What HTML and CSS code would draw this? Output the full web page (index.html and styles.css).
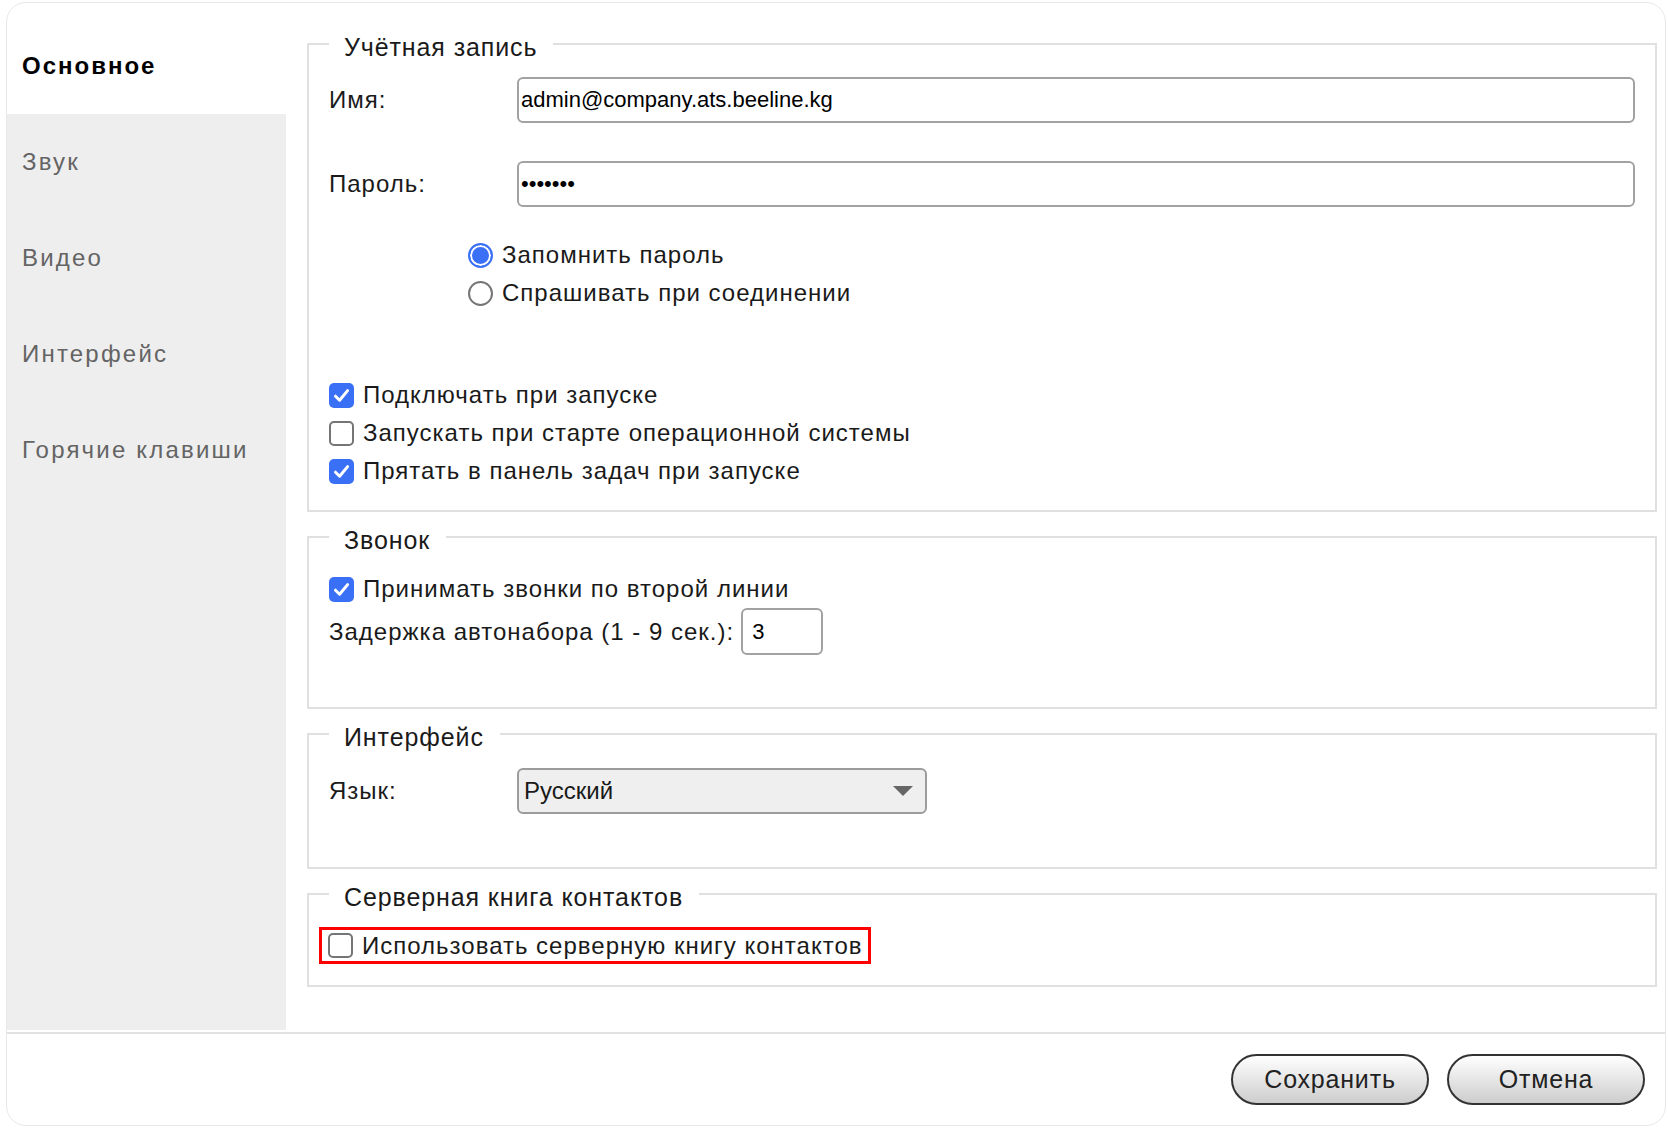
FILE: index.html
```html
<!DOCTYPE html>
<html lang="ru">
<head>
<meta charset="utf-8">
<title>Настройки</title>
<link rel="stylesheet" href="styles.css">
</head>
<body>
<div class="window">
  <div class="main">
    <nav class="sidebar">
      <div class="nav-item active">Основное</div>
      <div class="nav-rest">
        <div class="nav-item">Звук</div>
        <div class="nav-item">Видео</div>
        <div class="nav-item">Интерфейс</div>
        <div class="nav-item">Горячие клавиши</div>
      </div>
    </nav>
    <div class="content">
      <fieldset class="group group-account">
        <legend>Учётная запись</legend>
        <div class="field-row row-name">
          <span class="field-label">Имя:</span>
          <input class="text-input" type="text" value="admin@company.ats.beeline.kg">
        </div>
        <div class="field-row row-pass">
          <span class="field-label">Пароль:</span>
          <input class="text-input" type="password" value="1234567">
        </div>
        <div class="radio-group">
          <div class="option"><span class="radio on"></span><span>Запомнить пароль</span></div>
          <div class="option"><span class="radio"></span><span>Спрашивать при соединении</span></div>
        </div>
        <div class="check-group">
          <div class="option"><span class="check on"><svg viewBox="0 0 25 25" width="25" height="25"><path d="M6.5 13.2 L10.6 17.2 L18.6 7.6" fill="none" stroke="#fff" stroke-width="3" stroke-linecap="round" stroke-linejoin="round"/></svg></span><span>Подключать при запуске</span></div>
          <div class="option"><span class="check"></span><span>Запускать при старте операционной системы</span></div>
          <div class="option"><span class="check on"><svg viewBox="0 0 25 25" width="25" height="25"><path d="M6.5 13.2 L10.6 17.2 L18.6 7.6" fill="none" stroke="#fff" stroke-width="3" stroke-linecap="round" stroke-linejoin="round"/></svg></span><span>Прятать в панель задач при запуске</span></div>
        </div>
      </fieldset>

      <fieldset class="group group-call">
        <legend>Звонок</legend>
        <div class="option first-option"><span class="check on"><svg viewBox="0 0 25 25" width="25" height="25"><path d="M6.5 13.2 L10.6 17.2 L18.6 7.6" fill="none" stroke="#fff" stroke-width="3" stroke-linecap="round" stroke-linejoin="round"/></svg></span><span>Принимать звонки по второй линии</span></div>
        <div class="field-row">
          <span class="inline-label">Задержка автонабора (1 - 9 сек.):</span>
          <input class="text-input delay-input" type="text" value="3">
        </div>
      </fieldset>

      <fieldset class="group group-ui">
        <legend>Интерфейс</legend>
        <div class="field-row row-lang">
          <span class="field-label">Язык:</span>
          <div class="select">
            <span>Русский</span>
            <svg class="select-arrow" viewBox="0 0 20 10" width="20" height="10"><path d="M0 0 H20 L10 10 Z" fill="#666"/></svg>
          </div>
        </div>
      </fieldset>

      <fieldset class="group group-book">
        <legend>Серверная книга контактов</legend>
        <div class="highlight">
          <span class="check"></span><span>Использовать серверную книгу контактов</span>
        </div>
      </fieldset>
    </div>
  </div>
  <div class="footer">
    <button class="btn" type="button">Сохранить</button>
    <button class="btn" type="button">Отмена</button>
  </div>
</div>
</body>
</html>
```

FILE: styles.css
```css
html, body {
  margin: 0;
  padding: 0;
  background: #ffffff;
}

body {
  font-family: "Liberation Sans", Arial, sans-serif;
  color: #1a1a1a;
}

.window {
  margin: 2px 0 0 6px;
  width: 1660px;
  height: 1124px;
  box-sizing: border-box;
  border: 1px solid #e8e8e8;
  border-radius: 20px;
  display: flex;
  flex-direction: column;
  overflow: hidden;
  background: #fff;
}

.main {
  display: flex;
  height: 1029px;
  flex: none;
}

/* Sidebar */
.sidebar {
  width: 279px;
  flex: none;
  display: flex;
  flex-direction: column;
  padding-top: 15px;
  box-sizing: border-box;
}

.nav-item {
  height: 96px;
  display: flex;
  align-items: center;
  padding-left: 15px;
  font-size: 24px;
  letter-spacing: 2.2px;
  color: #646464;
}

.nav-item.active {
  font-weight: bold;
  color: #000;
  letter-spacing: 2px;
}

.nav-rest {
  flex: 1;
  background: #eeeeee;
  margin-bottom: 2px;
}

/* Content */
.content {
  flex: 1;
  padding: 24px 8px 0 21px;
  display: flex;
  flex-direction: column;
  gap: 8px;
}

.group {
  margin: 0;
  border: 2px solid #e0e0e0;
  padding: 0 20px;
  min-width: 0;
}

.group legend {
  padding: 7px 16px 1px 15px;
  font-size: 25px;
  line-height: 26px;
  letter-spacing: 0.9px;
  color: #1a1a1a;
}

.field-row {
  display: flex;
  align-items: center;
}

.field-label {
  width: 188px;
  flex: none;
  font-size: 24px;
  letter-spacing: 1px;
}

.inline-label {
  font-size: 24px;
  letter-spacing: 1px;
}

.text-input {
  flex: 1;
  min-width: 0;
  height: 46px;
  box-sizing: border-box;
  border: 2px solid #a2a2a2;
  border-radius: 6px;
  padding: 0 2px;
  margin: 0;
  font-family: "Liberation Sans", Arial, sans-serif;
  font-size: 22px;
  color: #000;
  background: #fff;
  outline: none;
}

.row-name {
  margin-top: 16px;
}

.row-pass {
  margin-top: 38px;
}

.radio-group {
  margin: 29px 0 0 139px;
}

.option {
  display: flex;
  align-items: center;
  height: 38px;
  gap: 9px;
  font-size: 24px;
  letter-spacing: 1px;
}

.check-group {
  margin-top: 64px;
  padding-bottom: 20px;
}

.radio {
  width: 25px;
  height: 25px;
  box-sizing: border-box;
  border-radius: 50%;
  border: 2px solid #757575;
  background: #fff;
  flex: none;
}

.radio.on {
  border-color: #3a70f6;
  background: #3a70f6;
  box-shadow: inset 0 0 0 2px #fff;
}

.check {
  width: 25px;
  height: 25px;
  box-sizing: border-box;
  border-radius: 5px;
  border: 2px solid #757575;
  background: #fff;
  flex: none;
  display: block;
}

.check.on {
  border: none;
  background: #3a70f6;
}

.check svg {
  display: block;
}

/* Call group */
.group-call {
  padding-bottom: 52px;
}

.first-option {
  margin-top: 16px;
}

.delay-input {
  flex: none;
  width: 82px;
  height: 47px;
  margin-left: 7px;
  padding: 0 9px;
}

/* Interface group */
.group-ui {
  padding-bottom: 53px;
}

.row-lang {
  margin-top: 17px;
}

.select {
  width: 410px;
  height: 46px;
  box-sizing: border-box;
  border: 2px solid #9c9c9c;
  border-radius: 6px;
  background: #efefef;
  display: flex;
  align-items: center;
  justify-content: space-between;
  padding: 0 12px 0 5px;
  font-size: 24px;
  color: #1a1a1a;
}

.select-arrow {
  display: block;
}

/* Contacts group */
.group-book {
  padding-bottom: 21px;
}

.highlight {
  align-self: flex-start;
  display: inline-flex;
  align-items: center;
  gap: 9px;
  height: 37px;
  box-sizing: border-box;
  margin: 16px 0 0 -10px;
  padding: 0 5px 0 6px;
  border: 3px solid #ff0000;
  font-size: 24px;
  letter-spacing: 1px;
}

/* Footer */
.footer {
  flex: 1;
  border-top: 2px solid #e2e2e2;
  display: flex;
  justify-content: flex-end;
  align-items: flex-start;
  gap: 18px;
  padding: 20px 20px 0 0;
}

.btn {
  width: 198px;
  height: 51px;
  box-sizing: border-box;
  border: 2px solid #333;
  border-radius: 26px;
  background: linear-gradient(#ffffff, #cdcdcd);
  font-family: "Liberation Sans", Arial, sans-serif;
  font-size: 25px;
  letter-spacing: 0.8px;
  color: #222;
  padding: 0;
  margin: 0;
}
```
